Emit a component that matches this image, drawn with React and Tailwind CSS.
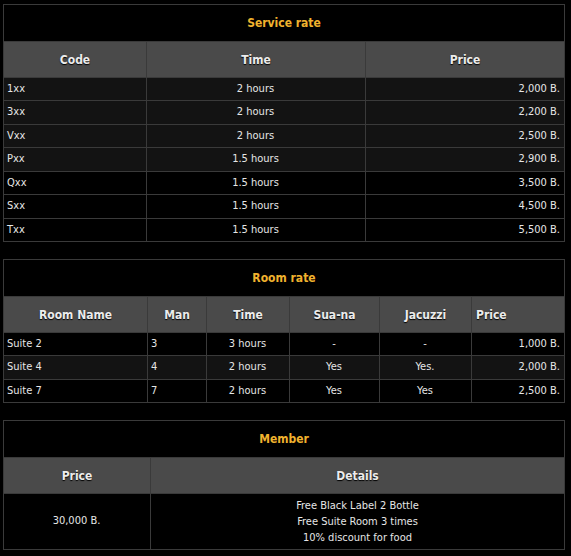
import React from "react";

const font = { fontFamily: '"DejaVu Sans Condensed", "DejaVu Sans", sans-serif' };

function Title({ children, span }) {
  return (
    <div className={`${span} bg-black h-[36px] flex items-center justify-center text-[12px] font-bold text-[#f0b22e]`}>
      {children}
    </div>
  );
}

function Head({ children, align = "justify-center", h = "h-[35px]" }) {
  return (
    <div className={`bg-[#4a4a4a] ${h} flex items-center ${align} px-[4px] text-[12px] font-bold text-[#ececec] [text-shadow:0_1px_1px_#000]`}>
      {children}
    </div>
  );
}

function Cell({ children, align = "justify-start", bg, h }) {
  return (
    <div className={`${bg} ${h} flex items-center ${align} pl-[3px] pr-[4px] text-[11px] text-[#e6e6e6]`}>
      {children}
    </div>
  );
}

const service = [
  ["1xx", "2 hours", "2,000 B."],
  ["3xx", "2 hours", "2,200 B."],
  ["Vxx", "2 hours", "2,500 B."],
  ["Pxx", "1.5 hours", "2,900 B."],
  ["Qxx", "1.5 hours", "3,500 B."],
  ["Sxx", "1.5 hours", "4,500 B."],
  ["Txx", "1.5 hours", "5,500 B."],
];

const rooms = [
  ["Suite 2", "3", "3 hours", "-", "-", "1,000 B."],
  ["Suite 4", "4", "2 hours", "Yes", "Yes.", "2,000 B."],
  ["Suite 7", "7", "2 hours", "Yes", "Yes", "2,500 B."],
];

export default function App() {
  return (
    <div className="bg-black min-h-[556px] w-[571px] pt-[4px] pl-[3px]" style={font}>
      {/* Service rate */}
      <div className="w-[562px] grid grid-cols-[142px_218px_198px] gap-px p-px bg-[#3a3a3a]">
        <Title span="col-span-3">Service rate</Title>
        <Head>Code</Head>
        <Head>Time</Head>
        <Head>Price</Head>
        {service.map((r, i) => {
          const bg = i < 4 ? "bg-[#131313]" : "bg-black";
          const h = i % 2 === 0 ? "h-[22px]" : "h-[23px]";
          return (
            <React.Fragment key={i}>
              <Cell bg={bg} h={h}>{r[0]}</Cell>
              <Cell bg={bg} h={h} align="justify-center">{r[1]}</Cell>
              <Cell bg={bg} h={h} align="justify-end">{r[2]}</Cell>
            </React.Fragment>
          );
        })}
      </div>

      {/* Room rate */}
      <div className="mt-[17px] w-[562px] grid grid-cols-[143px_58px_82px_89px_91px_92px] gap-px p-px bg-[#3a3a3a]">
        <Title span="col-span-6">Room rate</Title>
        <Head>Room Name</Head>
        <Head>Man</Head>
        <Head>Time</Head>
        <Head>Sua-na</Head>
        <Head>Jacuzzi</Head>
        <Head align="justify-start">Price</Head>
        {rooms.map((r, i) => {
          const bg = i === 1 ? "bg-[#131313]" : "bg-black";
          const h = i % 2 === 0 ? "h-[22px]" : "h-[23px]";
          return (
            <React.Fragment key={i}>
              <Cell bg={bg} h={h}>{r[0]}</Cell>
              <Cell bg={bg} h={h}>{r[1]}</Cell>
              <Cell bg={bg} h={h} align="justify-center">{r[2]}</Cell>
              <Cell bg={bg} h={h} align="justify-center">{r[3]}</Cell>
              <Cell bg={bg} h={h} align="justify-center">{r[4]}</Cell>
              <Cell bg={bg} h={h} align="justify-end">{r[5]}</Cell>
            </React.Fragment>
          );
        })}
      </div>

      {/* Member */}
      <div className="mt-[17px] w-[562px] grid grid-cols-[146px_413px] gap-px p-px bg-[#3a3a3a]">
        <Title span="col-span-2">Member</Title>
        <Head>Price</Head>
        <Head>Details</Head>
        <Cell bg="bg-black" h="h-[55px]" align="justify-center">30,000 B.</Cell>
        <div className="bg-black h-[55px] flex flex-col items-center justify-center text-[11px] leading-[16px] text-[#e6e6e6]">
          <div>Free Black Label 2 Bottle</div>
          <div>Free Suite Room 3 times</div>
          <div>10% discount for food</div>
        </div>
      </div>
    </div>
  );
}
